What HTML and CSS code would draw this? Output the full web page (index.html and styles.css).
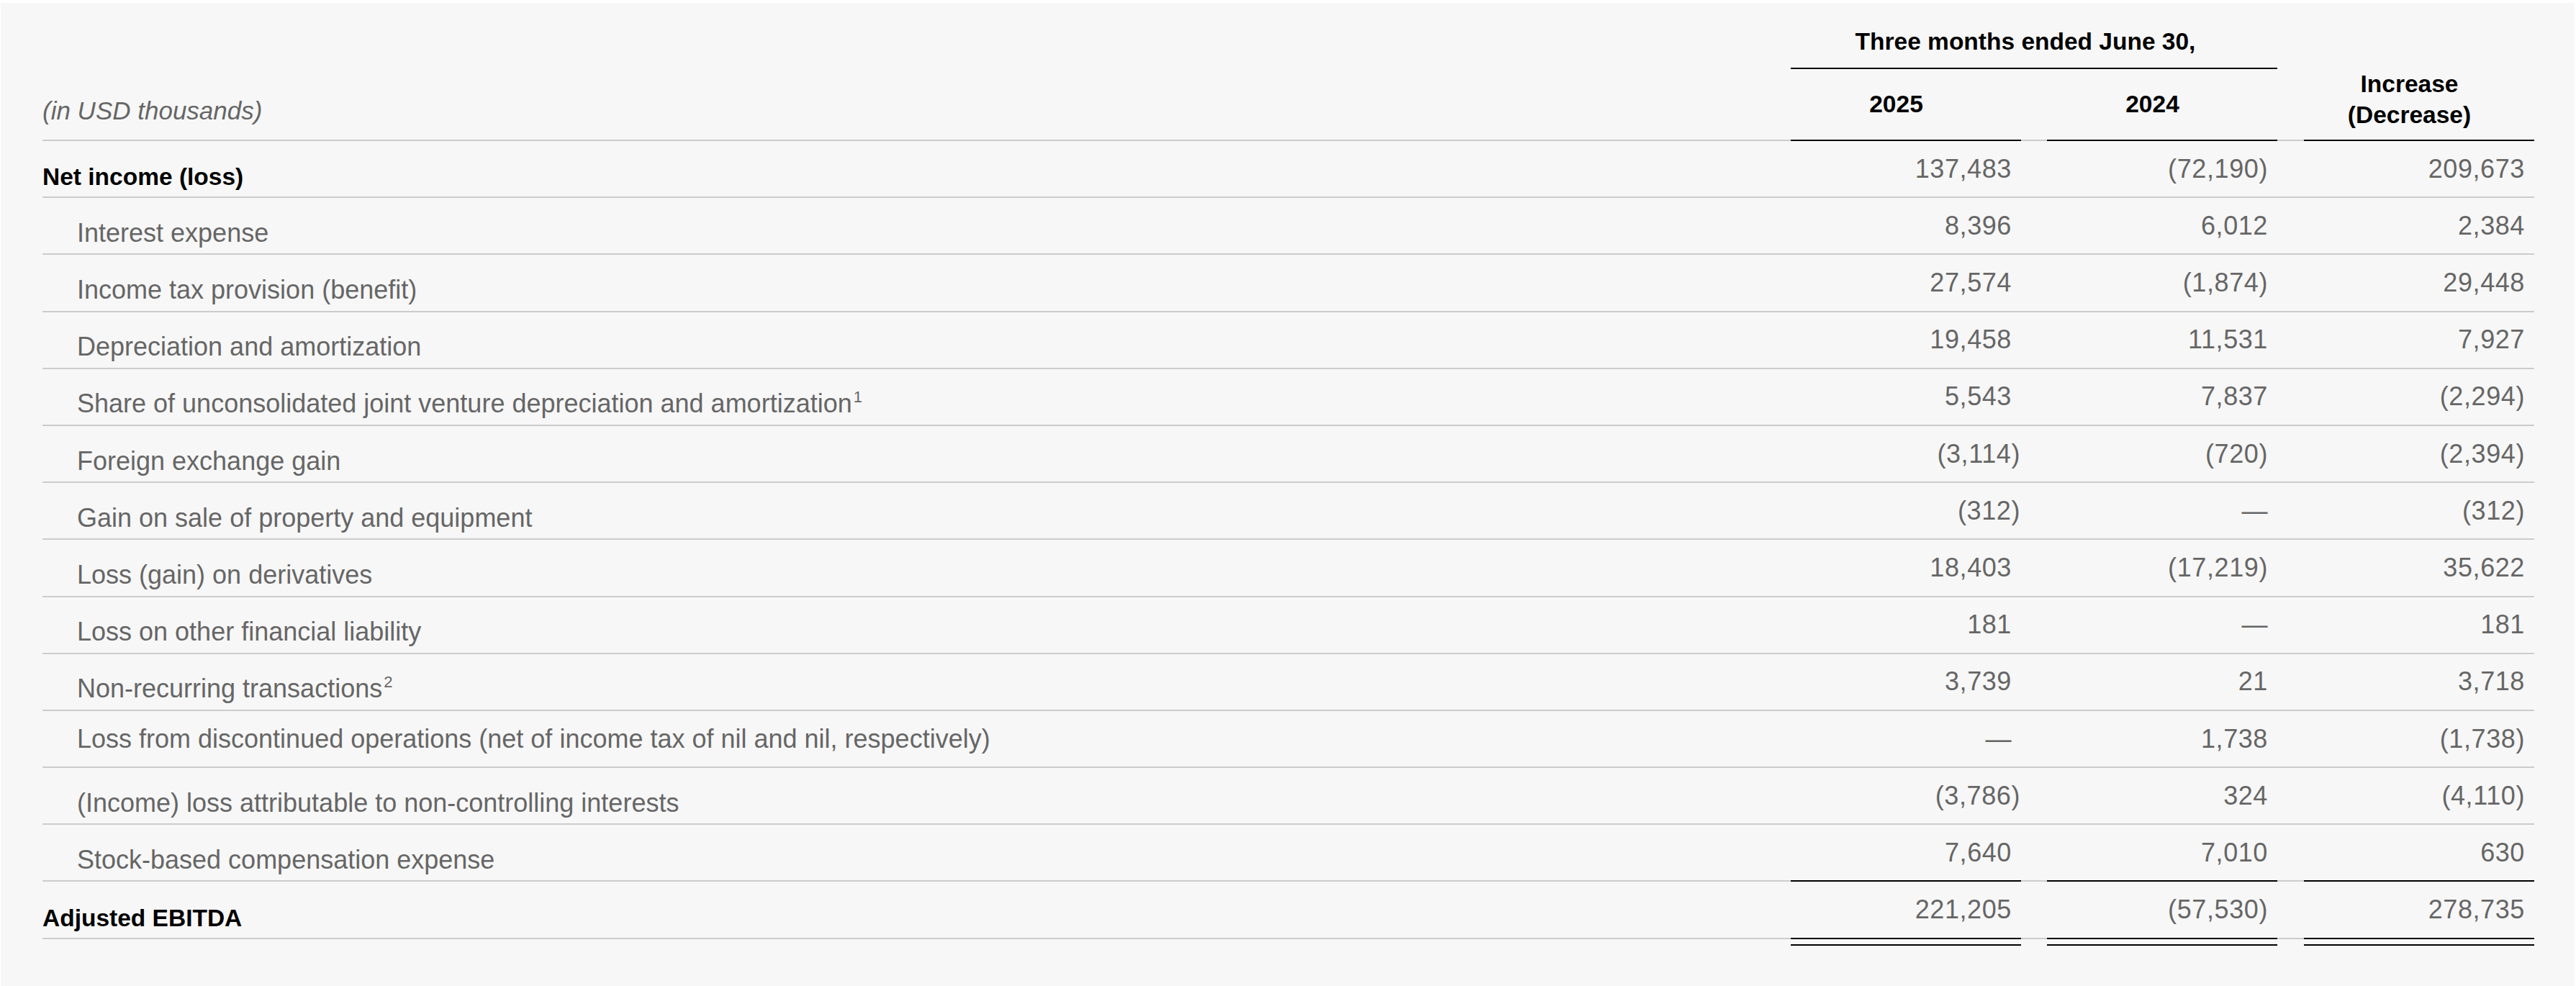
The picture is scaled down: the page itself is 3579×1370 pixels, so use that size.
FILE: index.html
```html
<!DOCTYPE html>
<html lang="en">
<head>
<meta charset="utf-8">
<title>Adjusted EBITDA reconciliation</title>
<link rel="stylesheet" href="styles.css">
</head>
<body>
<div class="page">
  <div class="tbl">
    <div class="row head1">
      <div class="cell label none"></div>
      <div class="cell span black"><span class="htext">Three months ended June 30,</span></div>
      <div class="cell gap2 none"></div>
      <div class="cell num none"></div>
    </div>
    <div class="row head2">
      <div class="cell label"><span class="unit">(in USD thousands)</span></div>
      <div class="cell num black hcell"><span class="htext">2025</span></div>
      <div class="cell gap1"></div>
      <div class="cell num black hcell"><span class="htext">2024</span></div>
      <div class="cell gap2"></div>
      <div class="cell num black hcell inc"><span class="htext">Increase<br>(Decrease)</span></div>
    </div>

    <div class="row">
      <div class="cell label bold"><span>Net income (loss)</span></div>
      <div class="cell num">137,483</div>
      <div class="cell gap1"></div>
      <div class="cell num">(72,190)</div>
      <div class="cell gap2"></div>
      <div class="cell num">209,673</div>
    </div>
    <div class="row">
      <div class="cell label ind"><span>Interest expense</span></div>
      <div class="cell num">8,396</div>
      <div class="cell gap1"></div>
      <div class="cell num">6,012</div>
      <div class="cell gap2"></div>
      <div class="cell num">2,384</div>
    </div>
    <div class="row">
      <div class="cell label ind"><span>Income tax provision (benefit)</span></div>
      <div class="cell num">27,574</div>
      <div class="cell gap1"></div>
      <div class="cell num">(1,874)</div>
      <div class="cell gap2"></div>
      <div class="cell num">29,448</div>
    </div>
    <div class="row">
      <div class="cell label ind"><span>Depreciation and amortization</span></div>
      <div class="cell num">19,458</div>
      <div class="cell gap1"></div>
      <div class="cell num">11,531</div>
      <div class="cell gap2"></div>
      <div class="cell num">7,927</div>
    </div>
    <div class="row">
      <div class="cell label ind"><span>Share of unconsolidated joint venture depreciation and amortization<sup>1</sup></span></div>
      <div class="cell num">5,543</div>
      <div class="cell gap1"></div>
      <div class="cell num">7,837</div>
      <div class="cell gap2"></div>
      <div class="cell num">(2,294)</div>
    </div>
    <div class="row">
      <div class="cell label ind"><span>Foreign exchange gain</span></div>
      <div class="cell num neg">(3,114)</div>
      <div class="cell gap1"></div>
      <div class="cell num">(720)</div>
      <div class="cell gap2"></div>
      <div class="cell num">(2,394)</div>
    </div>
    <div class="row">
      <div class="cell label ind"><span>Gain on sale of property and equipment</span></div>
      <div class="cell num neg">(312)</div>
      <div class="cell gap1"></div>
      <div class="cell num">&mdash;</div>
      <div class="cell gap2"></div>
      <div class="cell num">(312)</div>
    </div>
    <div class="row">
      <div class="cell label ind"><span>Loss (gain) on derivatives</span></div>
      <div class="cell num">18,403</div>
      <div class="cell gap1"></div>
      <div class="cell num">(17,219)</div>
      <div class="cell gap2"></div>
      <div class="cell num">35,622</div>
    </div>
    <div class="row">
      <div class="cell label ind"><span>Loss on other financial liability</span></div>
      <div class="cell num">181</div>
      <div class="cell gap1"></div>
      <div class="cell num">&mdash;</div>
      <div class="cell gap2"></div>
      <div class="cell num">181</div>
    </div>
    <div class="row">
      <div class="cell label ind"><span>Non-recurring transactions<sup>2</sup></span></div>
      <div class="cell num">3,739</div>
      <div class="cell gap1"></div>
      <div class="cell num">21</div>
      <div class="cell gap2"></div>
      <div class="cell num">3,718</div>
    </div>
    <div class="row">
      <div class="cell label ind high"><span>Loss from discontinued operations (net of income tax of nil and nil, respectively)</span></div>
      <div class="cell num">&mdash;</div>
      <div class="cell gap1"></div>
      <div class="cell num">1,738</div>
      <div class="cell gap2"></div>
      <div class="cell num">(1,738)</div>
    </div>
    <div class="row">
      <div class="cell label ind"><span>(Income) loss attributable to non-controlling interests</span></div>
      <div class="cell num neg">(3,786)</div>
      <div class="cell gap1"></div>
      <div class="cell num">324</div>
      <div class="cell gap2"></div>
      <div class="cell num">(4,110)</div>
    </div>
    <div class="row">
      <div class="cell label ind"><span>Stock-based compensation expense</span></div>
      <div class="cell num black">7,640</div>
      <div class="cell gap1"></div>
      <div class="cell num black">7,010</div>
      <div class="cell gap2"></div>
      <div class="cell num black">630</div>
    </div>
    <div class="row">
      <div class="cell label bold total"><span>Adjusted EBITDA</span></div>
      <div class="cell num black">221,205</div>
      <div class="cell gap1"></div>
      <div class="cell num black">(57,530)</div>
      <div class="cell gap2"></div>
      <div class="cell num black">278,735</div>
    </div>
    <div class="row dbl">
      <div class="ul-label"></div>
      <div class="ul"></div>
      <div class="ul-gap1"></div>
      <div class="ul"></div>
      <div class="ul-gap2"></div>
      <div class="ul"></div>
    </div>
  </div>
</div>
</body>
</html>
```

FILE: styles.css
```css
html, body {
  margin: 0;
  padding: 0;
  background: #ffffff;
}

.page {
  margin: 4px 2px 0 1px;
  padding: 0 56px 0 58px;
  background: #f7f7f7;
  min-height: 1366px;
  box-sizing: border-box;
  font-family: "Liberation Sans", Arial, sans-serif;
  color: #666666;
}

.tbl {
  display: flex;
  flex-direction: column;
}

.row {
  display: flex;
  height: 79.2px;
}

.row.head1 { height: 92px; }
.row.head2 { height: 100px; }
.row.dbl { height: 40px; }

.cell {
  display: flex;
  align-items: flex-end;
  box-sizing: border-box;
  border-bottom: 2px solid #cccccc;
  font-size: 36px;
  line-height: 40px;
  white-space: nowrap;
}

.cell.none { border-bottom-color: transparent; }
.cell.black { border-bottom-color: #000000; }

.label {
  flex: 1 1 auto;
  min-width: 0;
  padding-bottom: 8.5px;
}

.label.ind { padding-left: 48px; }
.label.high { padding-bottom: 18.5px; }

.label.bold {
  font-weight: 700;
  font-size: 33.5px;
  color: #000000;
  padding-bottom: 7px;
}

.num {
  flex: 0 0 320px;
  justify-content: flex-end;
  padding-right: 13px;
  padding-bottom: 18.5px;
  letter-spacing: 0.6px;
}

.num.neg { padding-right: 1px; }

.gap1 { flex: 0 0 36px; }
.gap2 { flex: 0 0 37px; }

.span {
  flex: 0 0 676px;
  justify-content: center;
  padding-right: 24px;
  padding-bottom: 16.5px;
}

.htext {
  font-weight: 700;
  font-size: 33.5px;
  color: #000000;
  letter-spacing: 0;
}

.hcell {
  justify-content: center;
  padding-right: 27px;
  padding-bottom: 29.5px;
}

.hcell.inc {
  text-align: center;
  line-height: 43px;
  padding-bottom: 13px;
}

.unit {
  font-style: italic;
  font-size: 35px;
  padding-bottom: 11.5px;
}

sup {
  font-size: 22px;
  line-height: 0;
  vertical-align: 14px;
  margin-left: 2px;
}

.ul-label { flex: 1 1 auto; }
.ul-gap1 { flex: 0 0 36px; }
.ul-gap2 { flex: 0 0 37px; }
.ul {
  flex: 0 0 320px;
  height: 2px;
  margin-top: 7px;
  background: #000000;
}
```
